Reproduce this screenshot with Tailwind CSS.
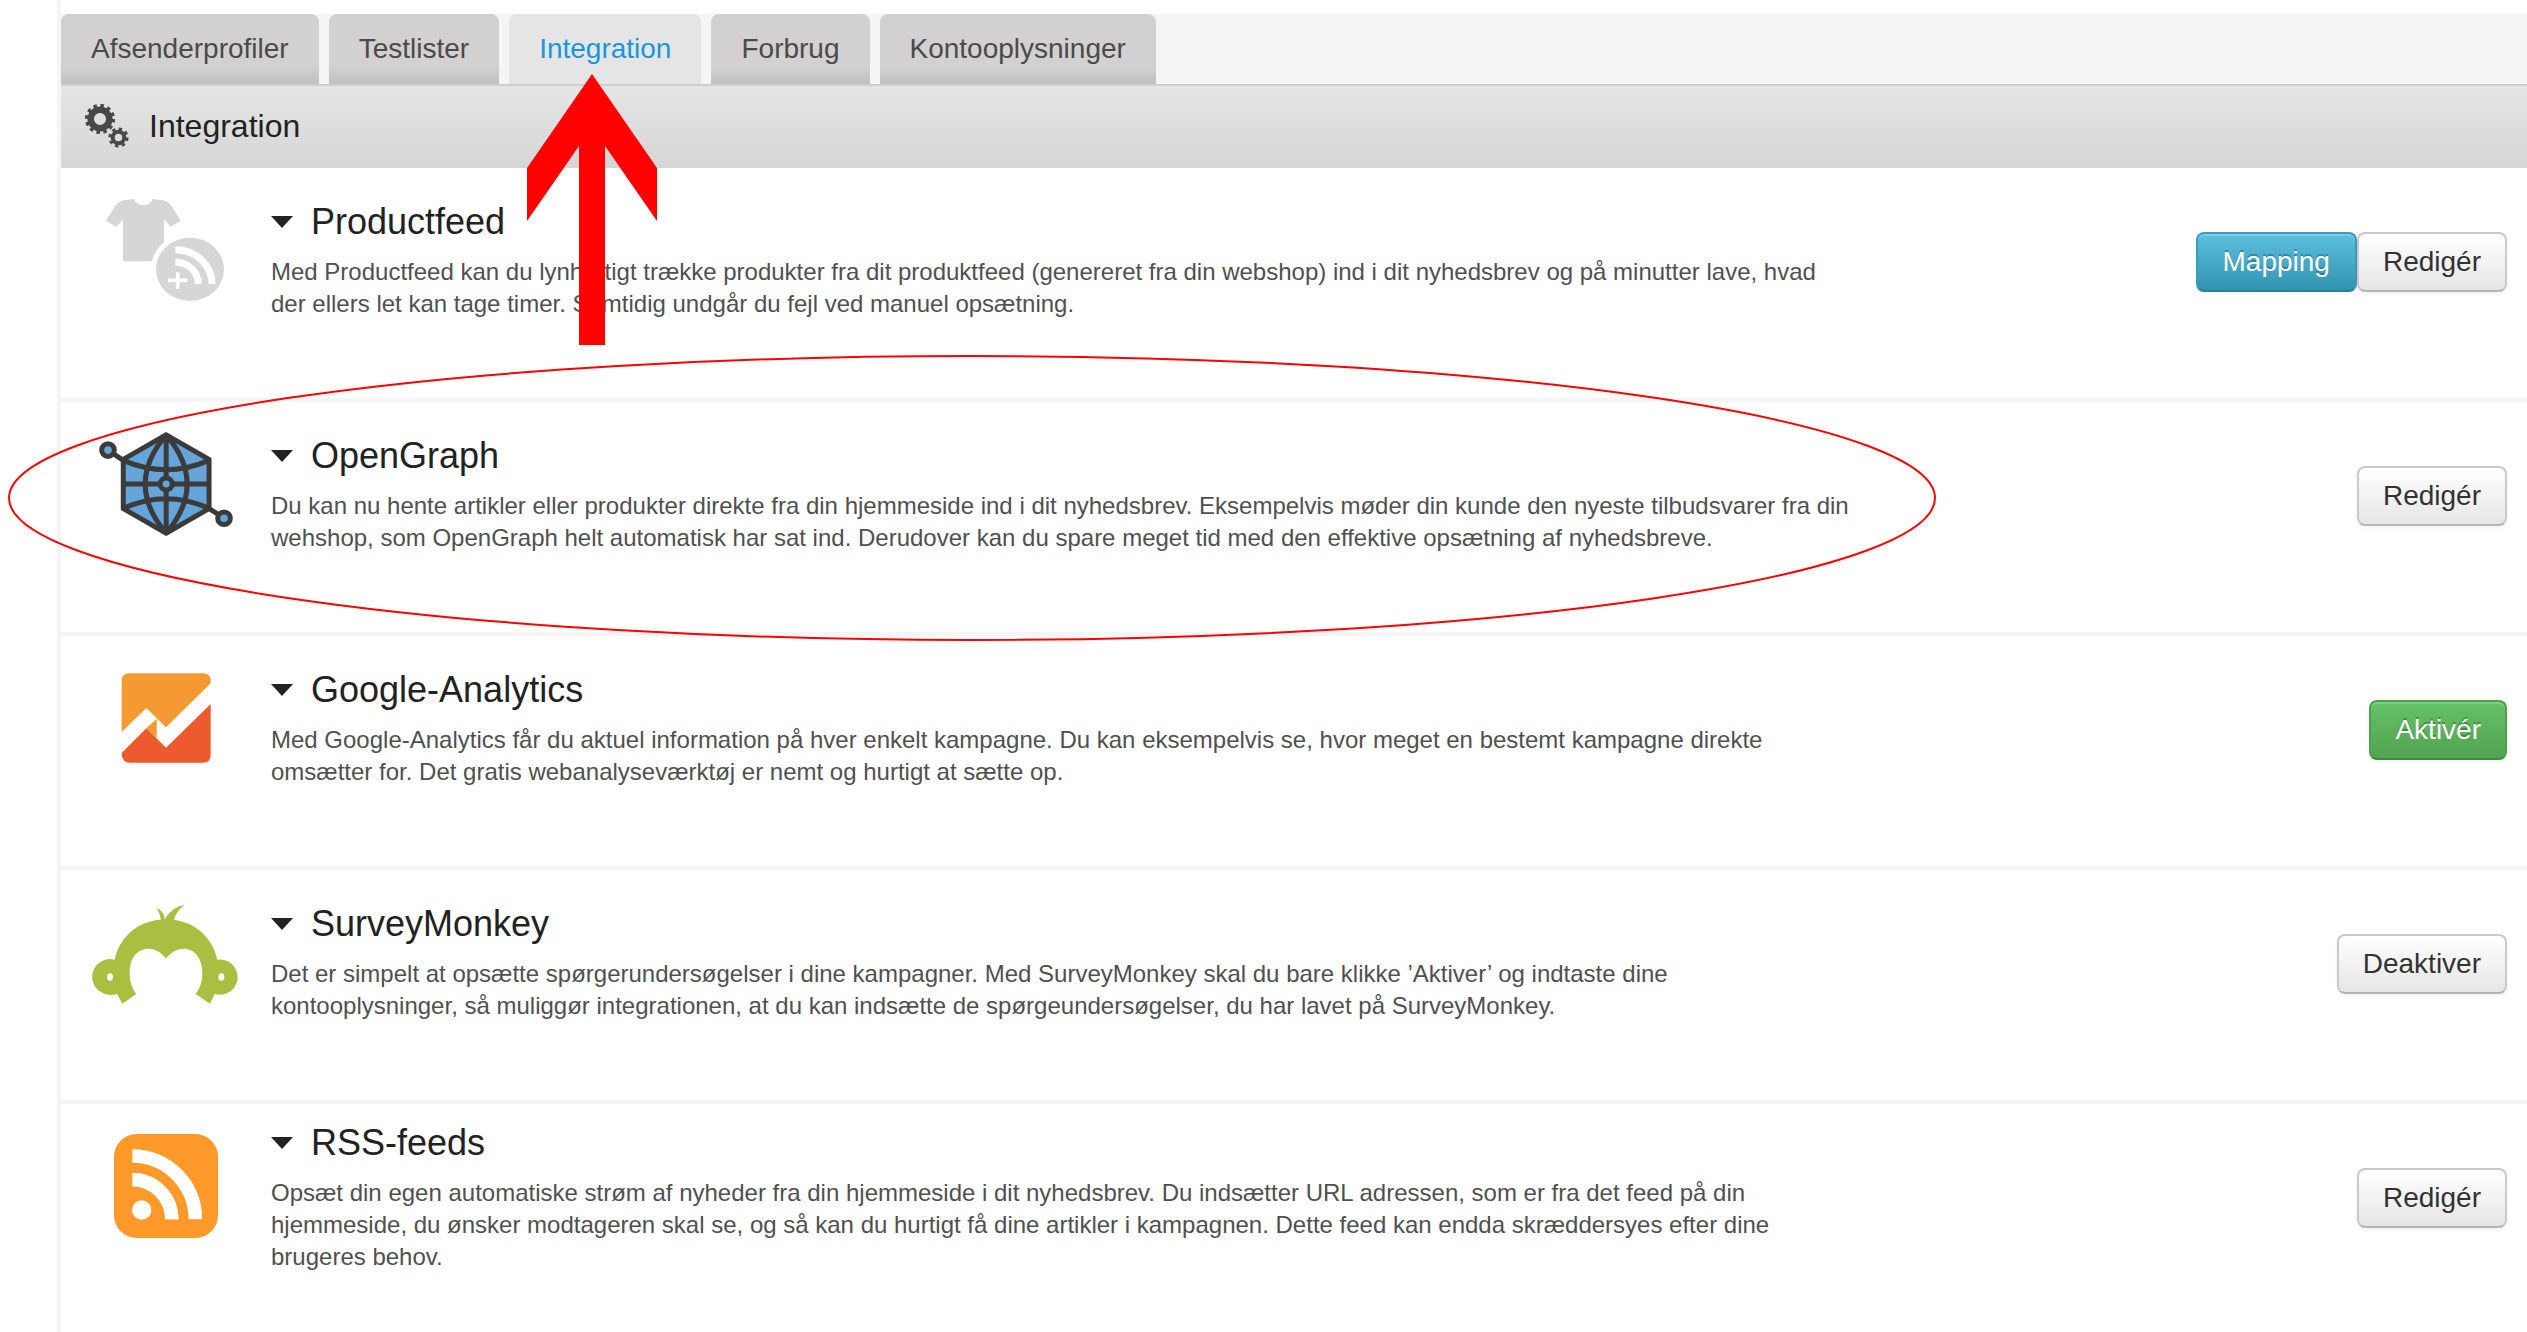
<!DOCTYPE html>
<html lang="da">

<head>
    <meta charset="UTF-8">
    <meta name="viewport" content="width=device-width, initial-scale=1">
    <title>Integration</title>
    <script src="https://cdn.jsdelivr.net/npm/@tailwindcss/browser@4"></script>
</head>

<body class="bg-white font-['Liberation_Sans',Arial,sans-serif] text-[#222]">

    <main class="relative ml-[57px] min-h-screen border-l-4 border-[#f5f5f5] pt-[14px]">

        <!-- Tabs -->
        <nav class="flex gap-[10px] bg-[#f5f5f5] text-[28px] leading-[70px] text-[#4a4a4a]">
            <a href="#" class="rounded-t-lg bg-linear-to-b from-[#d2d0d1] from-75% to-[#c1bfc0] px-[30px]">Afsenderprofiler</a>
            <a href="#" class="rounded-t-lg bg-linear-to-b from-[#d2d0d1] from-75% to-[#c1bfc0] px-[30px]">Testlister</a>
            <a href="#" class="rounded-t-lg bg-[#e5e5e5] px-[30px] text-[#1896da]">Integration</a>
            <a href="#" class="rounded-t-lg bg-linear-to-b from-[#d2d0d1] from-75% to-[#c1bfc0] px-[30px]">Forbrug</a>
            <a href="#" class="rounded-t-lg bg-linear-to-b from-[#d2d0d1] from-75% to-[#c1bfc0] px-[30px]">Kontooplysninger</a>
        </nav>

        <!-- Section header -->
        <header class="flex h-[84px] items-center gap-5 border-t-2 border-[#cfcfcf] bg-linear-to-b from-[#e5e5e5] to-[#d6d6d6] pb-[2px] pl-6">
            <svg class="h-11 w-11" viewBox="0 0 44 44" fill="none" stroke="#484848">
                <circle cx="15" cy="15" r="9.3" stroke-width="6.5" />
                <circle cx="15" cy="15" r="13.4" stroke-width="3.4" stroke-dasharray="3.5 3.516" />
                <circle cx="33.5" cy="33.5" r="5.8" stroke-width="4" />
                <circle cx="33.5" cy="33.5" r="8.6" stroke-width="3" stroke-dasharray="3.3 3.454" />
            </svg>
            <h1 class="text-[32px] leading-10">Integration</h1>
        </header>

        <!-- Integrations -->
        <section class="flex h-[234px] items-start border-b-4 border-[#f5f5f5] pr-5">
            <div class="mt-[30px] flex h-[104px] w-[208px] shrink-0 items-center justify-center">
                <svg class="h-[102px] w-[118px]" viewBox="135 84 354 306">
                    <path fill="#d6d6d6" d="M189 88L219 84Q225 102 247 102Q269 102 275 84L305 88Q322 92 332 106L359 149L329 167L309 145V271H186V145L166 167L135 149L162 106Q172 92 189 88Z" />
                    <ellipse cx="387" cy="295" rx="118" ry="109" fill="#fff" />
                    <ellipse cx="387" cy="295" rx="102" ry="95" fill="#d6d6d6" />
                    <g fill="none" stroke="#fff">
                        <path stroke-width="21" d="M343 236A110 103 0 0 1 453 339M343 273A70 66 0 0 1 412 339" />
                        <path stroke-width="11" d="M321 328H379M350 304V353" />
                    </g>
                </svg>
            </div>
            <div class="self-center pb-[44px] pl-[2px]">
                <h2 class="flex items-center gap-[18px] text-[36px] leading-10">
                    <svg class="h-3 w-[22px]" viewBox="0 0 22 12" fill="#222"><path d="M0 0H22L11 12Z" /></svg>
                    Productfeed
                </h2>
                <p class="mt-[14px] max-w-[1582px] text-[24px] leading-8 text-[#505050]">Med Productfeed kan du lynhurtigt trække produkter fra dit produktfeed (genereret fra din webshop) ind i dit nyhedsbrev og på minutter lave, hvad der ellers let kan tage timer. Samtidig undgår du fejl ved manuel opsætning.</p>
            </div>
            <div class="mt-16 ml-auto flex shrink-0 text-[28px] leading-[56px]">
                <button class="rounded-lg border-2 border-[#3a9dba] border-b-[#2f819a] bg-linear-to-b from-[#5bc0de] to-[#3394b1] px-[25px] text-white shadow-[inset_0_2px_0_rgb(255_255_255/0.2),0_2px_4px_rgb(0_0_0/0.05)] text-shadow-[0_-2px_0_rgb(0_0_0/0.25)]">Mapping</button>
                <button class="rounded-lg border-2 border-[#c9c9c9] border-b-[#b5b5b5] bg-linear-to-b from-white to-[#e6e6e6] px-6 text-[#333] shadow-[0_2px_4px_rgb(0_0_0/0.05)]">Redigér</button>
            </div>
        </section>

        <section class="flex h-[234px] items-start border-b-4 border-[#f5f5f5] pr-5">
            <div class="mt-[30px] flex h-[104px] w-[210px] shrink-0 items-center justify-center">
                <svg class="h-[104px] w-[134px]" viewBox="117 96 403 312" fill="none" stroke="#3b3b3b" stroke-width="15">
                    <path d="M144 150L190 181M447 325L494 355" />
                    <path fill="#65a5d9" d="M319 104L448 178V326L319 400L190 326V178Z" />
                    <path d="M319 104V400M190 252H448M190 181Q319 237 448 181M190 325Q319 267 448 325M319 104Q193 252 319 400M319 104Q445 252 319 400" />
                    <circle cx="319" cy="252" r="18" fill="#65a5d9" />
                    <circle cx="144" cy="150" r="19" fill="#65a5d9" />
                    <circle cx="493" cy="355" r="19" fill="#65a5d9" />
                </svg>
            </div>
            <div class="self-center pb-[44px]">
                <h2 class="flex items-center gap-[18px] text-[36px] leading-10">
                    <svg class="h-3 w-[22px]" viewBox="0 0 22 12" fill="#222"><path d="M0 0H22L11 12Z" /></svg>
                    OpenGraph
                </h2>
                <p class="mt-[14px] max-w-[1582px] text-[24px] leading-8 text-[#505050]">Du kan nu hente artikler eller produkter direkte fra din hjemmeside ind i dit nyhedsbrev. Eksempelvis møder din kunde den nyeste tilbudsvarer fra din wehshop, som OpenGraph helt automatisk har sat ind. Derudover kan du spare meget tid med den effektive opsætning af nyhedsbreve.</p>
            </div>
            <div class="mt-16 ml-auto flex shrink-0 text-[28px] leading-[56px]">
                <button class="rounded-lg border-2 border-[#c9c9c9] border-b-[#b5b5b5] bg-linear-to-b from-white to-[#e6e6e6] px-6 text-[#333] shadow-[0_2px_4px_rgb(0_0_0/0.05)]">Redigér</button>
            </div>
        </section>

        <section class="flex h-[234px] items-start border-b-4 border-[#f5f5f5] pr-5">
            <div class="mt-[30px] flex h-[104px] w-[210px] shrink-0 items-center justify-center">
                <svg class="h-[90px] w-[90px]" viewBox="184 98 270 270">
                    <path fill="#f59a33" d="M186 275V122Q186 99 209 99H430Q453 99 453 122V129L319 261L260 203Z" />
                    <path fill="#f59a33" d="M260 264L291 235V294Z" />
                    <path fill="#ed5a2e" d="M186 338L260 264L319 322L453 191V344Q453 367 430 367H209Q190 367 186 344Z" />
                </svg>
            </div>
            <div class="self-center pb-[44px]">
                <h2 class="flex items-center gap-[18px] text-[36px] leading-10">
                    <svg class="h-3 w-[22px]" viewBox="0 0 22 12" fill="#222"><path d="M0 0H22L11 12Z" /></svg>
                    Google-Analytics
                </h2>
                <p class="mt-[14px] max-w-[1582px] text-[24px] leading-8 text-[#505050]">Med Google-Analytics får du aktuel information på hver enkelt kampagne. Du kan eksempelvis se, hvor meget en bestemt kampagne direkte omsætter for. Det gratis webanalyseværktøj er nemt og hurtigt at sætte op.</p>
            </div>
            <div class="mt-16 ml-auto flex shrink-0 text-[28px] leading-[56px]">
                <button class="rounded-lg border-2 border-[#4f9f4f] border-b-[#438743] bg-linear-to-b from-[#65c265] to-[#53a353] px-6 text-white shadow-[inset_0_2px_0_rgb(255_255_255/0.2),0_2px_4px_rgb(0_0_0/0.05)] text-shadow-[0_-2px_0_rgb(0_0_0/0.25)]">Aktivér</button>
            </div>
        </section>

        <section class="flex h-[234px] items-start border-b-4 border-[#f5f5f5] pr-5">
            <div class="mt-8 flex h-[104px] w-[210px] shrink-0 items-center justify-center">
                <svg class="h-[100px] w-[148px]" viewBox="98 96 444 300">
                    <g fill="#a9bf41">
                        <path d="M316 143Q317 120 292 107Q303 126 305 144ZM318 138Q337 106 376 98Q348 120 343 148H318Z" />
                        <path d="M189 395L173 365Q158 372 138 366A53 53 0 0 1 166 263C182 190 243 142 320 142C397 142 458 190 474 263A53 53 0 1 1 466 366L452 395L409 366C424 347 429 325 429 303C429 258 406 230 372 230C350 230 334 243 320 259C306 243 290 230 268 230C234 230 211 258 211 303C211 325 216 347 231 366Z" />
                    </g>
                    <g fill="#fff">
                        <ellipse cx="152" cy="315" rx="9" ry="11" />
                        <ellipse cx="486" cy="315" rx="9" ry="11" />
                    </g>
                </svg>
            </div>
            <div class="self-center pb-[44px]">
                <h2 class="flex items-center gap-[18px] text-[36px] leading-10">
                    <svg class="h-3 w-[22px]" viewBox="0 0 22 12" fill="#222"><path d="M0 0H22L11 12Z" /></svg>
                    SurveyMonkey
                </h2>
                <p class="mt-[14px] max-w-[1582px] text-[24px] leading-8 text-[#505050]">Det er simpelt at opsætte spørgerundersøgelser i dine kampagner. Med SurveyMonkey skal du bare klikke ’Aktiver’ og indtaste dine kontooplysninger, så muliggør integrationen, at du kan indsætte de spørgeundersøgelser, du har lavet på SurveyMonkey.</p>
            </div>
            <div class="mt-16 ml-auto flex shrink-0 text-[28px] leading-[56px]">
                <button class="rounded-lg border-2 border-[#c9c9c9] border-b-[#b5b5b5] bg-linear-to-b from-white to-[#e6e6e6] px-6 text-[#333] shadow-[0_2px_4px_rgb(0_0_0/0.05)]">Deaktiver</button>
            </div>
        </section>

        <section class="flex h-[228px] items-start pr-5">
            <div class="mt-[30px] flex h-[104px] w-[210px] shrink-0 items-center justify-center">
                <svg class="h-[104px] w-[104px]" viewBox="159 132 312 312">
                    <rect x="159" y="132" width="312" height="312" rx="68" fill="#ff992a" />
                    <circle cx="242" cy="360" r="29" fill="#fff" />
                    <path fill="none" stroke="#fff" stroke-width="41" d="M214 198A189 189 0 0 1 403 388M214 269A118 118 0 0 1 332 388" />
                </svg>
            </div>
            <div class="self-center pb-10">
                <h2 class="flex items-center gap-[18px] text-[36px] leading-10">
                    <svg class="h-3 w-[22px]" viewBox="0 0 22 12" fill="#222"><path d="M0 0H22L11 12Z" /></svg>
                    RSS-feeds
                </h2>
                <p class="mt-[14px] max-w-[1582px] text-[24px] leading-8 text-[#505050]">Opsæt din egen automatiske strøm af nyheder fra din hjemmeside i dit nyhedsbrev. Du indsætter URL adressen, som er fra det feed på din hjemmeside, du ønsker modtageren skal se, og så kan du hurtigt få dine artikler i kampagnen. Dette feed kan endda skræddersyes efter dine brugeres behov.</p>
            </div>
            <div class="mt-16 ml-auto flex shrink-0 text-[28px] leading-[56px]">
                <button class="rounded-lg border-2 border-[#c9c9c9] border-b-[#b5b5b5] bg-linear-to-b from-white to-[#e6e6e6] px-6 text-[#333] shadow-[0_2px_4px_rgb(0_0_0/0.05)]">Redigér</button>
            </div>
        </section>
    </main>

    <!-- Arrow and ring that point out OpenGraph -->
    <svg class="pointer-events-none absolute top-[74px] left-[527px] h-[271px] w-[130px]" viewBox="0 0 130 271" fill="red">
        <path d="M65 0L130 94V147L78 72V271H52V72L0 147V94Z" />
    </svg>
    <svg class="pointer-events-none absolute top-[355px] left-[8px] h-[286px] w-[1928px]" viewBox="0 0 1928 286" fill="none" stroke="red" stroke-width="2">
        <ellipse cx="964" cy="143" rx="963" ry="142" />
    </svg>

</body>

</html>
